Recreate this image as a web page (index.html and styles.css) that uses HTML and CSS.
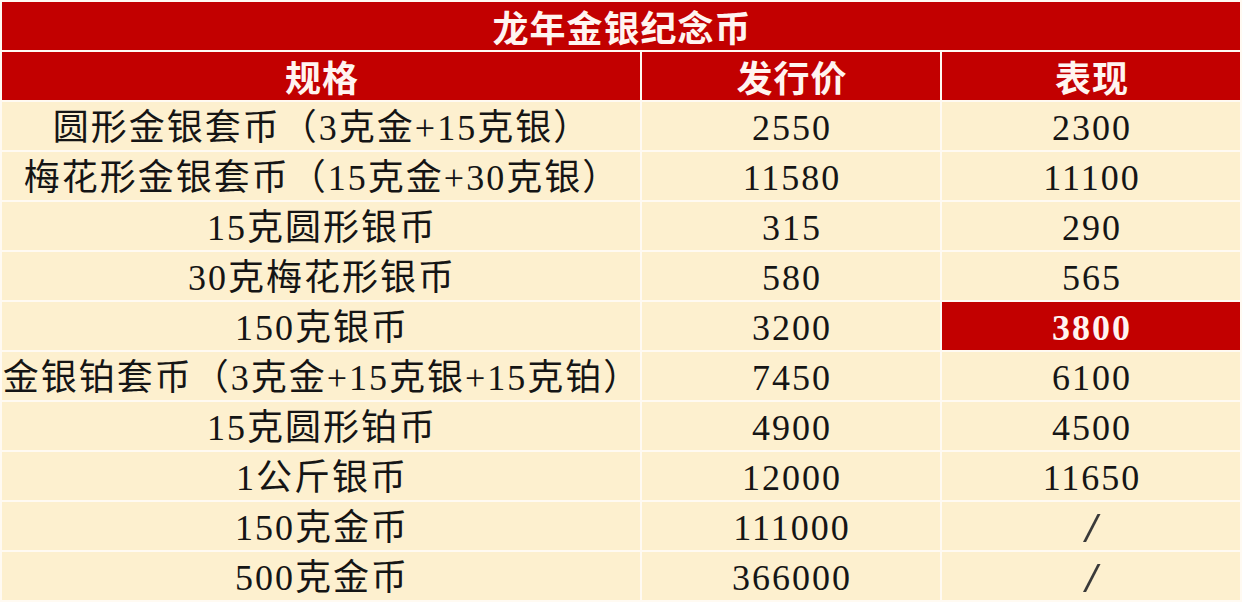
FILE: index.html
```html
<!DOCTYPE html>
<html lang="zh-CN">
<head>
<meta charset="utf-8">
<link rel="stylesheet" href="styles.css">
</head>
<body>
<div class="table">
  <div class="cell title span3">龙年金银纪念币</div>
  <div class="cell head">规格</div>
  <div class="cell head">发行价</div>
  <div class="cell head">表现</div>

  <div class="cell">圆形金银套币（3克金+15克银）</div>
  <div class="cell">2550</div>
  <div class="cell">2300</div>

  <div class="cell">梅花形金银套币（15克金+30克银）</div>
  <div class="cell">11580</div>
  <div class="cell">11100</div>

  <div class="cell">15克圆形银币</div>
  <div class="cell">315</div>
  <div class="cell">290</div>

  <div class="cell">30克梅花形银币</div>
  <div class="cell">580</div>
  <div class="cell">565</div>

  <div class="cell">150克银币</div>
  <div class="cell">3200</div>
  <div class="cell hot">3800</div>

  <div class="cell">金银铂套币（3克金+15克银+15克铂）</div>
  <div class="cell">7450</div>
  <div class="cell">6100</div>

  <div class="cell">15克圆形铂币</div>
  <div class="cell">4900</div>
  <div class="cell">4500</div>

  <div class="cell">1公斤银币</div>
  <div class="cell">12000</div>
  <div class="cell">11650</div>

  <div class="cell">150克金币</div>
  <div class="cell">111000</div>
  <div class="cell slash"><span class="glyph">/</span></div>

  <div class="cell">500克金币</div>
  <div class="cell">366000</div>
  <div class="cell slash"><span class="glyph">/</span></div>
</div>
</body>
</html>
```

FILE: styles.css
```css
html, body {
  margin: 0;
  padding: 0;
  background: #fffaf2;
}
body {
  width: 1242px;
  height: 602px;
  overflow: hidden;
}
.table {
  display: grid;
  grid-template-columns: 638px 298px 298px;
  grid-auto-rows: 48px;
  column-gap: 2px;
  row-gap: 2px;
  padding: 2px 0 0 2px;
  font-family: "Liberation Serif", "Noto Sans CJK SC", serif;
  font-size: 36px;
  color: #151515;
}
.cell {
  background: #fdf0cf;
  display: flex;
  align-items: center;
  justify-content: center;
  white-space: nowrap;
  line-height: 1;
  padding-top: 4px;
  padding-left: 2px;
  letter-spacing: 2px;
  box-sizing: border-box;
}
.span3 {
  grid-column: 1 / 4;
}
.title, .head {
  background: #c20000;
  color: #fff4f0;
  font-family: "Noto Sans CJK SC", sans-serif;
  font-weight: 700;
  font-size: 36px;
  padding-top: 0;
  letter-spacing: 1px;
}
.hot {
  background: #c20000;
  color: #fff4f0;
  font-weight: 700;
}
.slash {
  letter-spacing: 0;
  padding-left: 0;
  color: #3a3a3a;
}
.glyph {
  display: inline-block;
  font-size: 42px;
  transform: scaleX(1.5);
  margin-left: 2px;
}
```
